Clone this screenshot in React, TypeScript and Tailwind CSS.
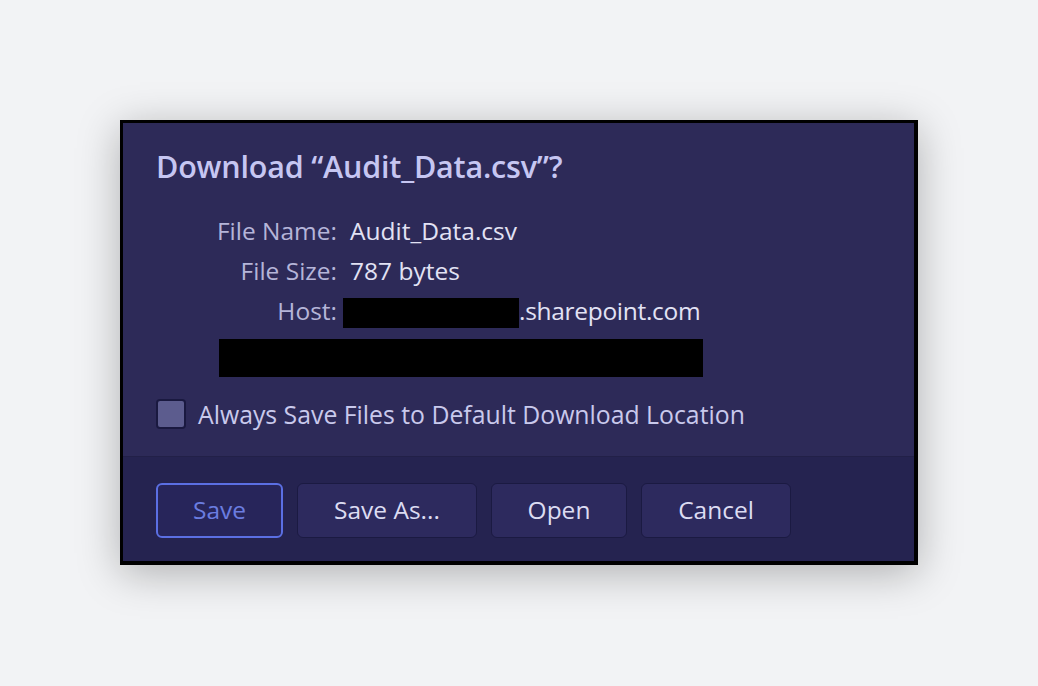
export default function App() {
  const font = { fontFamily: '"Open Sans", "Noto Sans", sans-serif' };
  return (
    <div className="w-[1038px] h-[686px] bg-[#f2f3f5] flex items-start justify-start pt-[120px] pl-[120px]" style={font}>
      <div className="w-[798px] h-[445px] border-l-[3px] border-t-[3px] border-r-4 border-b-4 border-black bg-[#2d2a58] flex flex-col shadow-[0_8px_40px_rgba(0,0,0,0.28)]">
        <div className="flex-1 flex flex-col pl-[33px] pt-[24px]">
          <div className="text-[30.5px] font-semibold text-[#c6c6f2] leading-[38px] tracking-[-0.2px]">Download “Audit_Data.csv”?</div>
          <div className="mt-[26px] flex flex-col text-[24.5px] leading-[40px]">
            <div className="flex">
              <span className="w-[181px] text-right text-[#b5b5d9]">File Name:</span>
              <span className="ml-[13px] text-[#e2e2f4]">Audit_Data.csv</span>
            </div>
            <div className="flex">
              <span className="w-[181px] text-right text-[#b5b5d9]">File Size:</span>
              <span className="ml-[13px] text-[#e2e2f4]">787 bytes</span>
            </div>
            <div className="flex items-start">
              <span className="w-[181px] text-right text-[#b5b5d9]">Host:</span>
              <span className="ml-[6px] mt-[7px] w-[176px] h-[30px] bg-black"></span>
              <span className="text-[#e2e2f4] tracking-[-0.3px]">.sharepoint.com</span>
            </div>
          </div>
          <div className="ml-[63px] mt-[8px] w-[484px] h-[38px] bg-black"></div>
          <div className="mt-[22px] flex items-center">
            <span className="w-[30px] h-[30px] rounded-[4px] bg-[#5c5c8e] border-2 border-[#1a1940]"></span>
            <span className="ml-[12px] text-[24.8px] leading-[30px] text-[#c9c9ec]">Always Save Files to Default Download Location</span>
          </div>
        </div>
        <div className="h-[105px] bg-[#252350] border-t border-[#222048] flex items-center gap-[14px] pl-[33px] pt-[2px]">
          <button className="w-[127px] h-[55px] rounded-[6px] border-2 border-[#5b6fe3] text-[#6b7de0] text-[24.5px] bg-[#27255a]">Save</button>
          <button className="w-[180px] h-[55px] rounded-[6px] border border-[#1b1a42] text-[#dcdcf2] text-[24.5px] bg-[#2d2a5e]">Save As...</button>
          <button className="w-[136px] h-[55px] rounded-[6px] border border-[#1b1a42] text-[#dcdcf2] text-[24.5px] bg-[#2d2a5e]">Open</button>
          <button className="w-[150px] h-[55px] rounded-[6px] border border-[#1b1a42] text-[#dcdcf2] text-[24.5px] bg-[#2d2a5e]">Cancel</button>
        </div>
      </div>
    </div>
  );
}
